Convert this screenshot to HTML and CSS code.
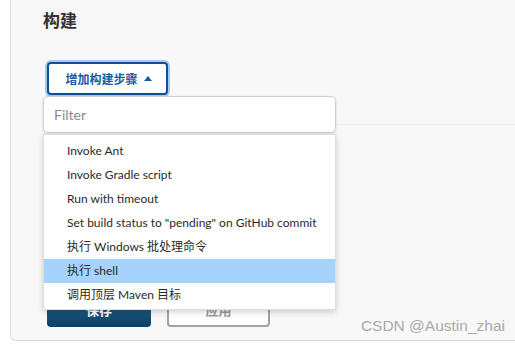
FILE: index.html
```html
<!DOCTYPE html>
<html lang="zh">
<head>
<meta charset="utf-8">
<link rel="stylesheet" href="styles.css">
</head>
<body>
<div class="panel">
  <h2 class="title">构建</h2>
  <div class="add-wrap">
    <button class="add-btn">增加构建步骤 <span class="caret"></span></button>
    <div class="dropdown">
      <div class="filter">Filter</div>
      <ul class="menu">
        <li>Invoke Ant</li>
        <li>Invoke Gradle script</li>
        <li>Run with timeout</li>
        <li>Set build status to "pending" on GitHub commit</li>
        <li>执行 Windows 批处理命令</li>
        <li class="active">执行 shell</li>
        <li>调用顶层 Maven 目标</li>
      </ul>
    </div>
  </div>
  <div class="divider"></div>
  <div class="actions">
    <button class="btn-save">保存</button>
    <button class="btn-apply">应用</button>
  </div>
  <div class="watermark">CSDN @Austin_zhai</div>
</div>
</body>
</html>
```
FILE: styles.css
```css
html, body {
  margin: 0;
  padding: 0;
  background: #fff;
  font-family: "Noto Sans", "Noto Sans CJK SC", sans-serif;
}
.panel {
  position: relative;
  margin-left: 10px;
  height: 340px;
  background: #f8f8f8;
  border-left: 1px solid #dcdcdc;
  border-bottom: 1px solid #dcdcdc;
  border-bottom-left-radius: 6px;
  padding-left: 32px;
  box-sizing: content-box;
  overflow: visible;
}
.title {
  margin: 0;
  padding-top: 9px;
  font-size: 17px;
  line-height: 24px;
  font-weight: 700;
  color: #333;
}
.add-wrap {
  position: relative;
  margin-top: 29px;
  height: 33px;
  padding-left: 4px;
}
.add-btn {
  height: 33px;
  width: 121px;
  box-sizing: border-box;
  border: 2px solid #0d4f98;
  border-radius: 4px;
  box-shadow: 0 0 0 2px #a8c9e8;
  background: #fff;
  color: #1b5aa0;
  font-family: "Noto Sans CJK SC", sans-serif;
  font-size: 12px;
  font-weight: 700;
  padding: 0 0 0 2px;
  display: flex;
  align-items: center;
  justify-content: center;
  gap: 4px;
}
.caret {
  width: 0;
  height: 0;
  border-left: 4px solid transparent;
  border-right: 4px solid transparent;
  border-bottom: 5px solid #1b5aa0;
  margin-left: 2px;
}
.dropdown {
  position: absolute;
  left: 0;
  top: 34px;
  width: 293px;
  z-index: 5;
}
.filter {
  height: 37px;
  box-sizing: border-box;
  border: 1px solid #cfcfcf;
  border-radius: 5px;
  background: #fff;
  box-shadow: 0 1px 3px rgba(0,0,0,0.12);
  padding-left: 10px;
  font-family: "Lato", "Noto Sans", sans-serif;
  font-size: 14px;
  line-height: 35px;
  color: #8a8a8a;
}
.menu {
  list-style: none;
  margin: 1px 0 0;
  padding: 4px 0 2px;
  background: #fff;
  border: 1px solid #dedede;
  box-shadow: 0 2px 6px rgba(0,0,0,0.18);
}
.menu li {
  height: 24px;
  line-height: 24px;
  padding-left: 23px;
  font-family: "Lato", "Noto Sans CJK SC", sans-serif;
  font-size: 12px;
  color: #2a2a2a;
}
.menu li.active {
  background: #a6d3fb;
}
.divider {
  margin-top: 29px;
  margin-left: 294px;
  height: 1px;
  background: #ececec;
}
.actions {
  display: flex;
  gap: 16px;
  margin-top: 168px;
  padding-left: 4px;
}
.actions button {
  height: 34px;
  box-sizing: border-box;
  border-radius: 4px;
  font-family: "Noto Sans CJK SC", sans-serif;
  font-size: 13px;
  font-weight: 700;
  padding: 0 0 0 0;
  line-height: 30px;
}
.btn-save {
  width: 104px;
  border: none;
  background: linear-gradient(#2a6b96, #0b3f66);
  color: #fff;
}
.btn-apply {
  width: 103px;
  border: 2px solid #9aa3a8;
  background: #fff;
  color: #999;
}
.watermark {
  position: absolute;
  right: 10px;
  bottom: 5px;
  font-family: "Liberation Sans", sans-serif;
  font-size: 15.5px;
  color: #aaaaaa;
}
```
